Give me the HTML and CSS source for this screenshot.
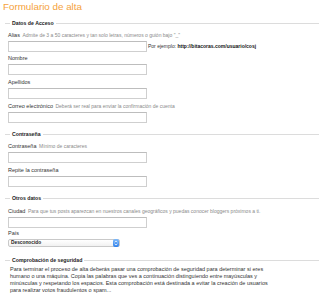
FILE: index.html
```html
<!DOCTYPE html>
<html lang="es">
<head>
<meta charset="utf-8">
<title>Formulario de alta</title>
<link rel="stylesheet" href="styles.css">
</head>
<body>
<h1 class="title">Formulario de alta</h1>

<fieldset class="group">
  <legend class="legend">Datos de Acceso</legend>
  <div class="fields">
    <div class="field">
      <label class="label">Alias <span class="hint">Admite de 3 a 50 caracteres y tan solo letras, números o guión bajo "_"</span></label>
      <div class="row"><input class="input" type="text"><span class="example">Por ejemplo: <b>http://bitacoras.com/usuario/cosj</b></span></div>
    </div>
    <div class="field">
      <label class="label">Nombre</label>
      <input class="input" type="text">
    </div>
    <div class="field">
      <label class="label">Apellidos</label>
      <input class="input" type="text">
    </div>
    <div class="field">
      <label class="label">Correo electrónico <span class="hint">Deberá ser real para enviar la confirmación de cuenta</span></label>
      <input class="input" type="text">
    </div>
  </div>
</fieldset>

<fieldset class="group">
  <legend class="legend">Contraseña</legend>
  <div class="fields">
    <div class="field">
      <label class="label">Contraseña <span class="hint">Mínimo de caracteres</span></label>
      <input class="input" type="password">
    </div>
    <div class="field">
      <label class="label">Repite la contraseña</label>
      <input class="input" type="password">
    </div>
  </div>
</fieldset>

<fieldset class="group">
  <legend class="legend">Otros datos</legend>
  <div class="fields fields-wide">
    <div class="field field-tight">
      <label class="label">Ciudad <span class="hint">Para que tus posts aparezcan en nuestros canales geográficos y puedas conocer bloggers próximos a ti.</span></label>
      <input class="input" type="text">
    </div>
    <div class="field">
      <label class="label label-select">País</label>
      <div class="select">
        <span class="select-value">Desconocido</span>
        <span class="select-btn">
          <svg width="4" height="6" viewBox="0 0 4 6"><path d="M0.6 2.3 L2 0.9 L3.4 2.3 M0.6 3.7 L2 5.1 L3.4 3.7" fill="none" stroke="#fff" stroke-width="0.8"/></svg>
        </span>
      </div>
    </div>
  </div>
</fieldset>

<fieldset class="group group-last">
  <legend class="legend">Comprobación de seguridad</legend>
  <p class="text">Para terminar el proceso de alta deberás pasar una comprobación de seguridad para determinar si eres humano o una máquina. Copia las palabras que ves a continuación distinguiendo entre mayúsculas y minúsculas y respetando los espacios. Esta comprobación está destinada a evitar la creación de usuarios para realizar votos fraudulentos o spam...</p>
</fieldset>
</body>
</html>
```

FILE: styles.css
```css
html, body {
  margin: 0;
  padding: 0;
  background: #fff;
}

body {
  font-family: "Liberation Sans", Arial, sans-serif;
  color: #333;
}

.title {
  margin: 0 0 6.5px 0;
  padding: 0 0 0 3px;
  font-size: 9.8px;
  line-height: 13px;
  font-weight: normal;
  color: #f5a23c;
}

.group {
  margin: 4.5px 1px 0 5px;
  padding: 0 0 0 3px;
  border: 0;
  border-top: 1px solid #dcdcdc;
  min-width: 0;
}

.title + .group {
  margin-top: 0;
}

.legend {
  margin-left: 2px;
  padding: 0 2px;
  font-size: 5.2px;
  line-height: 7px;
  font-weight: bold;
  color: #222;
}

.fields {
  padding-top: 5px;
}

.fields-wide {
  padding-top: 5.5px;
}

.field {
  margin-bottom: 3.8px;
}

.field-tight {
  margin-bottom: 2px;
}

.label {
  display: block;
  font-size: 5.5px;
  line-height: 7px;
  margin-bottom: 2px;
  color: #333;
}

.label-select {
  margin-bottom: 2.5px;
}

.hint {
  font-size: 5px;
  color: #8a8a8a;
  margin-left: 1px;
}

.row {
  display: flex;
  align-items: center;
  gap: 1px;
}

.input {
  display: block;
  box-sizing: border-box;
  width: 139px;
  height: 11px;
  margin: 0;
  padding: 0;
  border: 1px solid #cfcfcf;
  border-top-color: #bdbdbd;
  background: #fff;
  flex: none;
}

.example {
  font-size: 5px;
  line-height: 7px;
  color: #333;
  white-space: nowrap;
}

.example b {
  color: #111;
}

.select {
  box-sizing: border-box;
  display: flex;
  align-items: center;
  width: 112px;
  height: 8px;
  border: 1px solid #c9c9c9;
  border-radius: 2px;
  background: linear-gradient(#ffffff, #f1f1f1);
}

.select-value {
  padding-left: 2px;
  font-size: 4.8px;
  font-weight: bold;
  color: #222;
  line-height: 6px;
}

.select-btn {
  margin-left: auto;
  width: 6px;
  height: 8px;
  margin-top: -1px;
  margin-bottom: -1px;
  border-radius: 2px;
  background: linear-gradient(#7cb9fb, #2f80ea);
  display: flex;
  align-items: center;
  justify-content: center;
}

.select-btn svg {
  display: block;
}

.group-last {
  margin-top: 6px;
}

.text {
  margin: 1.5px 0 0 2px;
  width: 262px;
  font-size: 5.5px;
  line-height: 7px;
  color: #333;
}
```
